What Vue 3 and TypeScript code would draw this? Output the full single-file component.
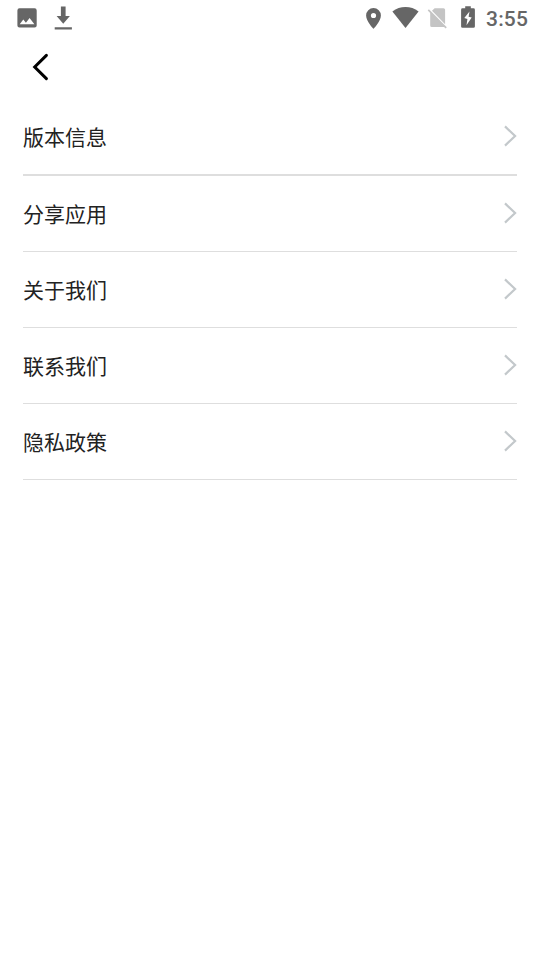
<script setup lang="ts">
const items: string[] = ['版本信息', '分享应用', '关于我们', '联系我们', '隐私政策']
</script>

<template>
  <div class="screen">
    <header class="status">
      <svg width="80" height="36" viewBox="0 0 80 36" fill="#666">
        <path fill-rule="evenodd" d="M19.500 8.300h15.100a2.100 2.100 0 0 1 2.100 2.100v15.100a2.100 2.100 0 0 1-2.100 2.100H19.500a2.100 2.100 0 0 1-2.100-2.100V10.400a2.100 2.100 0 0 1 2.100-2.100zM23.300 19.600L19.700 24.300h14.700l-4.800-6.200-3.700 4.700z" />
        <path d="M60.900 6.600h4.700v9.500h4.300L63.250 23.700l-6.650-7.600h4.300zM54.700 27.200h17.200v2.200H54.700z" />
      </svg>
      <div class="right">
        <svg width="125" height="36" viewBox="360 0 125 36" fill="#666">
          <path fill-rule="evenodd" d="M373.500 8a7.400 7.400 0 0 0-7.400 7.400c0 5.700 7.400 13.400 7.400 13.400s7.400-7.700 7.400-13.400a7.400 7.400 0 0 0-7.400-7.400zm0 4.900a2.600 2.600 0 1 1 0 5.200 2.600 2.600 0 0 1 0-5.200z" />
          <path d="M405.500 28L392.400 11.500Q398.300 7.100 405.500 7.100t13.100 4.400z" />
          <path fill="#c4c4c4" d="M434.600 8.200h8.900a1.600 1.600 0 0 1 1.600 1.600v14.500L432 10.800zM430.200 11.700L445.200 27.100H431.800a1.600 1.600 0 0 1-1.600-1.600z" />
          <path fill="none" stroke="#c4c4c4" stroke-width="1.700" d="M428.300 9.800L446.200 27.800" />
          <path fill-rule="evenodd" d="M473.500 8.300h-2.700V6.300h-5.600v2h-2.700a1.400 1.400 0 0 0-1.400 1.400v16.700a1.400 1.400 0 0 0 1.400 1.400h11a1.400 1.400 0 0 0 1.400-1.400V9.700a1.400 1.400 0 0 0-1.400-1.400zM466.500 25.200l.9-6.300-3.100-.9 5.200-6.600-.9 5.300 3.100.9z" />
        </svg>
        <span class="time">3:55</span>
      </div>
    </header>
    <nav class="bar">
      <svg width="20" height="30" viewBox="0 0 20 30" fill="none" stroke="#000" stroke-width="3" stroke-linecap="round">
        <path d="M16.400 3.400L4.700 15 16.400 26.600" />
      </svg>
    </nav>
    <main class="list">
      <div v-for="item in items" :key="item" class="row">
        <span class="label">{{ item }}</span>
        <svg class="chevron" width="14" height="22" viewBox="0 0 14 22" fill="none" stroke="#c3c8cb" stroke-width="2.200">
          <path d="M2 1.400L12.100 11 2 20.600" />
        </svg>
      </div>
    </main>
  </div>
</template>

<style>
body {
  margin: 0;
  background: #fff;
}
</style>

<style scoped>
.screen {
  width: 540px;
  height: 960px;
  overflow: hidden;
  background: #fff;
  font-family: Roboto, "Noto Sans CJK SC", sans-serif;
}
svg {
  display: block;
  flex: none;
}
.status {
  display: flex;
  justify-content: space-between;
  height: 36px;
}
.right {
  display: flex;
  width: 180px;
}
.time {
  margin-left: 1px;
  color: #666;
  font-size: 21px;
  font-weight: 500;
  line-height: 38px;
  letter-spacing: 0.2px;
  white-space: nowrap;
}
.bar {
  display: flex;
  align-items: flex-start;
  height: 63px;
  padding: 16px 30px 0;
  box-sizing: border-box;
}
.list {
  padding: 0 23px;
}
.row {
  display: flex;
  justify-content: space-between;
  align-items: flex-start;
  box-sizing: border-box;
  height: 76px;
  border-bottom: 1px solid #dedede;
}
.row:first-child {
  height: 77px;
  border-bottom-width: 2px;
}
.label {
  padding-top: 24px;
  color: #222;
  font-size: 21px;
  line-height: 31px;
}
.chevron {
  margin-top: 26px;
}
</style>
